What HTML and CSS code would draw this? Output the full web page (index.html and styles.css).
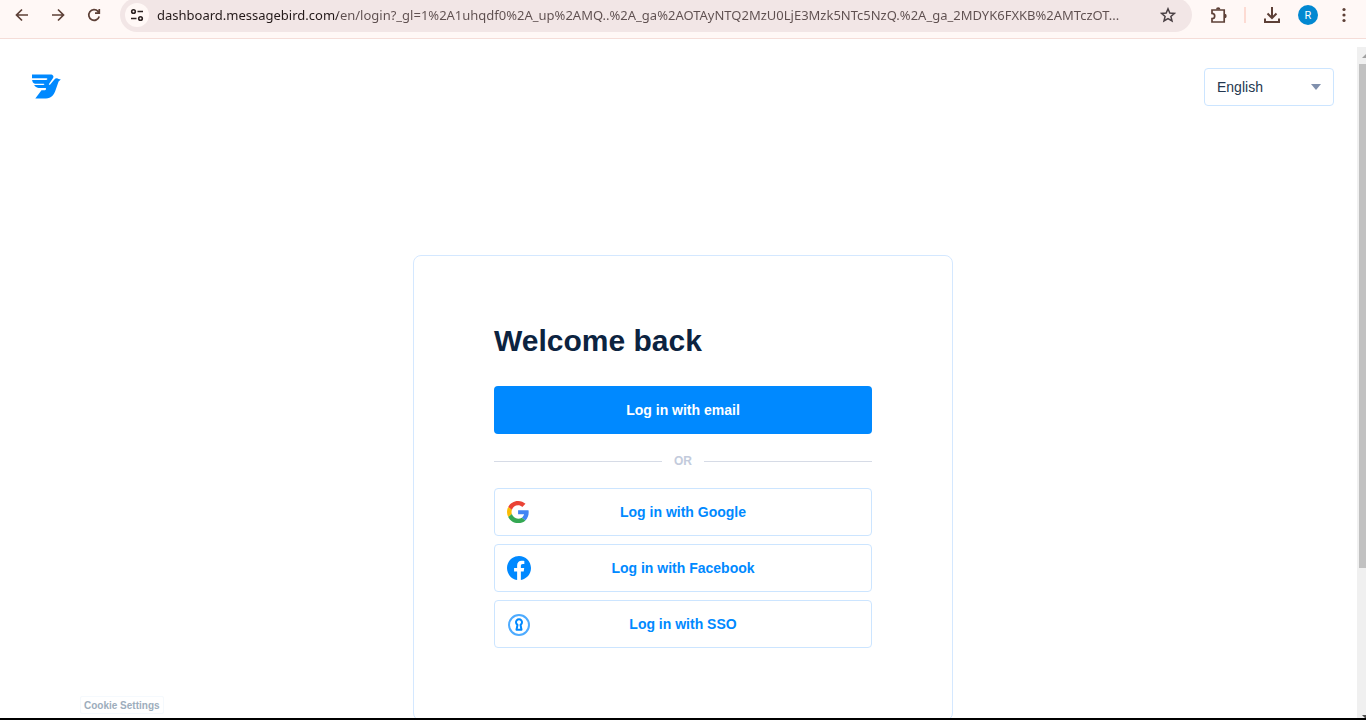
FILE: index.html
```
<!DOCTYPE html>
<html lang="en">
<head>
    <meta charset="UTF-8">
    <meta name="viewport" content="width=device-width, initial-scale=1.0">
    <title>Log in | MessageBird</title>
    <link rel="stylesheet" href="styles.css">
</head>
<body>
    <div class="toolbar">
        <div class="toolbar-row">
            <div class="nav-buttons">
                <button class="icon-btn" aria-label="Back">
                    <svg width="16" height="16" viewBox="0 0 16 16"><path d="M14 8H3M8 2.5L2.5 8L8 13.5"/></svg>
                </button>
                <button class="icon-btn" aria-label="Forward">
                    <svg width="16" height="16" viewBox="0 0 16 16"><path d="M2 8h11M8 2.5L13.5 8L8 13.5"/></svg>
                </button>
                <button class="icon-btn" aria-label="Reload">
                    <svg width="16" height="16" viewBox="0 0 16 16"><path d="M13.2 9.5A5.3 5.3 0 1 1 12 4.4L13.3 5.8M13.3 2v4.2H9"/></svg>
                </button>
            </div>
            <div class="address-bar">
                <button class="site-info" aria-label="Site information">
                    <svg width="14" height="14" viewBox="0 0 14 14"><circle cx="3.5" cy="3.5" r="1.8"/><path d="M7.5 3.5H13M1 10.5h5.5"/><circle cx="10.5" cy="10.5" r="1.8"/></svg>
                </button>
                <input class="url" type="text" aria-label="Address" value="dashboard.messagebird.com/en/login?_gl=1%2A1uhqdf0%2A_up%2AMQ..%2A_ga%2AOTAyNTQ2MzU0LjE3Mzk5NTc5NzQ.%2A_ga_2MDYK6FXKB%2AMTczOT...">
                <button class="icon-btn star" aria-label="Bookmark">
                    <svg width="16" height="16" viewBox="0 0 16 16"><path d="M8 1.8l1.8 4.2 4.6.4-3.5 3 1.1 4.5L8 11.5l-4 2.4 1.1-4.5-3.5-3 4.6-.4z"/></svg>
                </button>
            </div>
            <div class="browser-actions">
                <button class="icon-btn" aria-label="Extensions">
                    <svg width="18" height="18" viewBox="0 0 18 18"><path d="M2 4H14.2V16H2V12.7A2.7 2.7 0 0 0 2 7.3Z"/><path class="solid" d="M6 3.5a2.2 2.2 0 0 1 4.4 0zM14.5 7.8a2.2 2.2 0 0 1 0 4.4z"/></svg>
                </button>
                <span class="divider"></span>
                <button class="icon-btn download" aria-label="Downloads">
                    <svg width="18" height="18" viewBox="0 0 18 18"><path d="M9 1v10.5M4.5 7.5L9 12l4.5-4.5M2 12.5V16h14v-3.5"/></svg>
                </button>
                <button class="avatar" aria-label="Profile">R</button>
                <button class="icon-btn" aria-label="Menu">
                    <svg width="16" height="16" viewBox="0 0 16 16"><g class="solid"><circle cx="8" cy="2.5" r="1.6"/><circle cx="8" cy="8" r="1.6"/><circle cx="8" cy="13.5" r="1.6"/></g></svg>
                </button>
            </div>
        </div>
    </div>

    <div class="page">
        <header class="header">
            <a class="logo" href="#" aria-label="MessageBird">
                <svg width="29" height="25" viewBox="0 0 29 25">
                    <path d="M0 .5H18.5C21 .5 22.3 2.4 20.9 4.3L16.8 10.3L17.8 11L22.4 5.5C23.4 4.2 25.3 4 26.6 5L28.8 5.6L26.6 7.5L23.8 15.5C22 21 19.3 24.5 14 24.5H3.3L9.5 16.2H12.7C14 16.2 14.5 14.5 13.6 14H6.5C4.3 13.7 2.7 12.3 2.2 11H11.2C12.4 11 12.9 9.9 11.7 9.8H3C1.2 9.3 .3 8 .1 6H14C15.5 6 15.9 4.3 14.5 4.2H0Z"/>
                </svg>
            </a>
            <div class="language">
                <select aria-label="Language">
                    <option>English</option>
                </select>
            </div>
        </header>

        <main class="card">
            <h1>Welcome back</h1>
            <button class="btn btn-primary">Log in with email</button>
            <div class="or"><span>OR</span></div>
            <div class="providers">
                <button class="btn btn-outline">
                    <svg width="24" height="24" viewBox="-1 -2 52 52">
                        <path fill="#ea4335" d="M23 9.5c3.54 0 6.71 1.22 9.21 3.6l6.85-6.85C34.9 2.38 29.47 0 23 0 13.62 0 5.51 5.38 1.56 13.22l7.98 6.19C11.43 13.72 16.74 9.5 23 9.5z"/>
                        <path fill="#4285f4" d="M45.98 24.55c0-1.57-.15-3.09-.38-4.55H23v9.02h12.94c-.58 2.96-2.26 5.48-4.78 7.18l7.73 6c4.51-4.18 7.09-10.36 7.09-17.65z"/>
                        <path fill="#fbbc05" d="M9.53 28.59c-.48-1.45-.76-2.99-.76-4.59s.27-3.14.76-4.59l-7.98-6.19C-.08 16.46-1 20.12-1 24s.92 7.54 2.56 10.78z"/>
                        <path fill="#34a853" d="M23 48c6.48 0 11.93-2.13 15.89-5.81l-7.73-6c-2.15 1.45-4.92 2.3-8.16 2.3-6.26 0-11.57-4.22-13.47-9.91l-7.98 6.19C5.51 42.62 13.62 48 23 48z"/>
                    </svg>
                    <span>Log in with Google</span>
                </button>
                <button class="btn btn-outline">
                    <svg width="24" height="24" viewBox="0 0 24 24">
                        <path fill="#0089ff" d="M24 12.07C24 5.41 18.63 0 12 0S0 5.41 0 12.07C0 18.1 4.39 23.1 10.13 24v-8.44H7.08v-3.49h3.05V9.41c0-3.02 1.79-4.69 4.53-4.69 1.31 0 2.68.24 2.68.24v2.97h-1.51c-1.49 0-1.96.93-1.96 1.89v2.25h3.33l-.53 3.49h-2.8V24C19.61 23.1 24 18.1 24 12.07z"/>
                    </svg>
                    <span>Log in with Facebook</span>
                </button>
                <button class="btn btn-outline">
                    <svg width="24" height="24" viewBox="0 0 24 24" fill="none">
                        <circle cx="12" cy="13" r="10" stroke="#4dabff" stroke-width="2"/>
                        <path stroke="#0089ff" stroke-width="2" stroke-linejoin="round" d="M10.5 12.8A3 3 0 1 1 13.5 12.8L14.5 17.8H9.5Z"/>
                    </svg>
                    <span>Log in with SSO</span>
                </button>
            </div>
        </main>

        <button class="cookie-settings">Cookie Settings</button>
        <div class="scrollbar"><div class="thumb"></div></div>
    </div>
</body>
</html>
```
FILE: styles.css
```
* { box-sizing: border-box; }
body { margin: 0; height: 100vh; display: flex; flex-direction: column; overflow: hidden; background: #fff; border-bottom: 2px solid #000; font-family: "Liberation Sans", Arial, sans-serif; }
button { font-family: inherit; padding: 0; border: none; background: none; cursor: pointer; }
svg { display: block; flex: none; }

/* browser toolbar */
.toolbar { flex: none; height: 39px; display: flex; align-items: flex-end; padding-bottom: 6px; background: #fff8f6; border-bottom: 1px solid #f5ddd8; overflow: hidden; }
.toolbar-row { flex: 1; height: 34px; display: flex; align-items: center; }
.nav-buttons { display: flex; gap: 20px; padding: 0 18px 0 14px; }
.icon-btn { display: flex; }
.icon-btn svg { fill: none; stroke: #5d4037; stroke-width: 1.7; }
.icon-btn svg .solid { fill: #5d4037; stroke: none; }
.address-bar { flex: 1; min-width: 0; height: 34px; display: flex; align-items: center; padding: 0 16px 0 5px; background: #f2e6e6; border-radius: 17px; }
.site-info { width: 24px; height: 24px; display: flex; align-items: center; justify-content: center; background: #fff8f6; border-radius: 50%; }
.site-info svg { fill: none; stroke: #2a2020; stroke-width: 1.6; }
.url { flex: 1; min-width: 0; height: 24px; margin: 0 8px; padding: 0; border: none; outline: none; font: 13px "Noto Sans", "Open Sans", sans-serif; color: transparent; background: linear-gradient(90deg, #231919 181px, #5e4f4f 181px); -webkit-background-clip: text; background-clip: text; text-overflow: ellipsis; }
.star svg { stroke: #4a4044; stroke-width: 1.5; }
.browser-actions { display: flex; align-items: center; padding: 0 14px 0 18px; }
.divider { width: 2px; height: 16px; margin: 0 17px 0 16px; background: #fddbd3; }
.download svg { stroke-width: 2; }
.avatar { width: 20px; height: 20px; margin: 0 18px 0 17px; border-radius: 50%; background: #0288d1; color: #fff; font-family: Roboto, sans-serif; font-size: 11px; }

/* page */
.page { flex: 1; min-height: 0; margin-top: 8px; position: relative; overflow: hidden; }
.header { display: flex; justify-content: space-between; align-items: center; padding: 21px 32px 0; }
.logo { padding-bottom: 2px; }
.logo svg { fill: #0089ff; }
.language { position: relative; }
.language select { appearance: none; width: 130px; height: 38px; padding: 0 12px; border: 1px solid #cce5ff; border-radius: 4px; background: #fff; color: #24374f; font-family: inherit; font-size: 14px; }
.language::after { content: ""; position: absolute; top: 16px; right: 13px; border: 5px solid transparent; border-top: 6px solid #8090ad; border-bottom: none; pointer-events: none; }

.card { max-width: 540px; margin: 149px auto 0; padding: 65px 80px 72px; border: 1px solid #d4e8ff; border-radius: 8px; }
.card h1 { margin: 0 0 25px; font-size: 30px; line-height: 40px; color: #0c2340; }
.btn { width: 100%; height: 48px; display: flex; align-items: center; justify-content: center; border-radius: 4px; font-size: 14px; font-weight: bold; }
.btn-primary { background: #0089ff; color: #fff; }
.or { display: flex; align-items: center; gap: 12px; height: 54px; color: #c3cbdc; font-size: 12px; font-weight: bold; }
.or::before, .or::after { content: ""; flex: 1; height: 1px; background: #d6dbe6; }
.providers { display: grid; gap: 8px; }
.btn-outline { padding: 0 12px; border: 1px solid #cce5ff; background: #fff; color: #0089ff; }
.btn-outline span { flex: 1; padding-right: 24px; }

.cookie-settings { position: absolute; left: 80px; bottom: 4px; padding: 3px 3px 1px; border: 1px solid #f5f9fd; border-radius: 2px; background: #fff; color: #9dadbc; font-size: 10px; font-weight: bold; line-height: 12px; }
.scrollbar { position: absolute; top: 0; right: 0; bottom: 0; width: 9px; padding: 17px 0 0 2px; background: #f0f0f0; overflow: hidden; }
.scrollbar::before, .scrollbar::after { content: ""; position: absolute; left: 5px; border: 4px solid transparent; }
.scrollbar::before { top: 7px; border-top: none; border-bottom-color: #a0a0a0; }
.scrollbar::after { bottom: -1px; border-bottom: none; border-top-color: #505050; }
.thumb { height: 77%; background: #c1c1c1; }
```
